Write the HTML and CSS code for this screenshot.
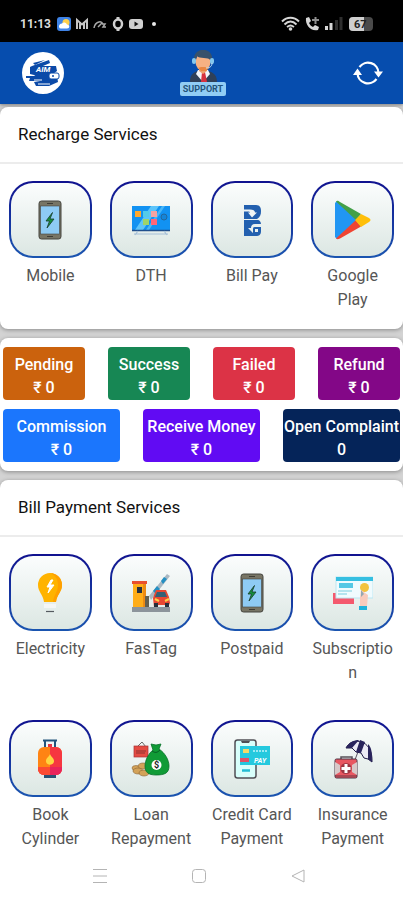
FILE: index.html
```html
<!DOCTYPE html>
<html lang="en">
<head>
  <meta charset="UTF-8">
  <meta name="viewport" content="width=device-width, initial-scale=1.0">
  <title>Recharge Services</title>
  <link rel="stylesheet" href="styles.css">
</head>
<body>

  <div class="status-bar">
    <span class="clock">11:13</span>
    <svg class="status-apps" width="102" height="16" viewBox="0 0 102 16" aria-hidden="true">
      <rect x="0" y="1" width="14" height="14" rx="3" fill="#3f83e6"/>
      <circle cx="9" cy="6.500" r="3.500" fill="#ffd04a"/>
      <path d="M2 11a3 3 0 0 1 3-3.500 3 3 0 0 1 5 1c3 0 3 4 0 4H4a2 2 0 0 1-2-1.500z" fill="#fff"/>
      <path d="M20 13V4l5 4.500L30 4v9M23 6v7M27 6v7" fill="none" stroke="#c4c4c4" stroke-width="2"/>
      <path d="M37 12c1-6 7-8 9-4M41 11l4-4M45 8h3l-2 3h3" fill="none" stroke="#a8a8a8" stroke-width="1.500"/>
      <ellipse cx="61" cy="8" rx="4" ry="4.500" fill="none" stroke="#cfcfcf" stroke-width="2.500"/>
      <path d="M61 1v3M61 12v3" stroke="#cfcfcf" stroke-width="3"/>
      <rect x="72" y="3" width="14" height="10" rx="3" fill="#d0d0d0"/>
      <path d="M77.500 5.500v5l4-2.500z" fill="#111"/>
      <circle cx="97" cy="8" r="2" fill="#e8e8e8"/>
    </svg>
    <svg class="status-signals" width="94" height="18" viewBox="0 0 94 18" aria-hidden="true">
      <g fill="none" stroke="#d6d6d6" stroke-width="2">
        <path d="M1 6.500c5-5 12-5 17 0M3.500 9.500c4-4 8-4 12 0M6 12c3-2 4-2 7 0"/>
      </g>
      <circle cx="9.500" cy="14" r="1.800" fill="#d6d6d6"/>
      <path d="M25 3l3-1 2 4-2 2c1 2 2 3 4 4l2-2 4 2-1 3c-7 2-13-5-12-12z" fill="#d6d6d6"/>
      <path d="M31 5h7M34.500 2v7" stroke="#8e8e8e" stroke-width="2"/>
      <path d="M45.500 11v4M50 8v7" stroke="#d6d6d6" stroke-width="3"/>
      <path d="M55.500 5v10M60 2v13" stroke="#2e2e2e" stroke-width="3"/>
      <rect x="68" y="2" width="24" height="14" rx="4" fill="#4a4a4a"/>
      <path d="M72 2h11v14H72a4 4 0 0 1-4-4V6a4 4 0 0 1 4-4z" fill="#cfcfcf"/>
      <text x="73" y="13" class="battery-text">67</text>
    </svg>
  </div>

  <header class="app-bar">
    <button class="bar-button" type="button" aria-label="Profile">
      <svg width="42" height="42" viewBox="0 0 42 42">
        <circle cx="21" cy="21" r="21" fill="#fff"/>
        <g fill="#0b4aa8">
          <path d="M10 14l17-6 1 3-7 3h13l1 5-7 5h7l1 6-9 4H14l-2-4 6-1H7l1-3h8l-4-3-4-1v-7z"/>
          <path d="M11 11l12-3-10 5z"/>
          <path d="M4 24h14v2H4z"/>
        </g>
        <path d="M12 28h8M16 32h12" stroke="#fff" stroke-width="1"/>
        <rect x="27" y="21" width="10" height="6" rx="2" fill="#fff" stroke="#0b4aa8"/>
        <circle cx="31" cy="24" r="1" fill="#0b4aa8"/>
        <text x="14" y="20" class="logo-text">AIM</text>
      </svg>
    </button>
    <button class="bar-button" type="button" aria-label="Support">
      <svg width="46" height="46" viewBox="0 0 46 46">
        <path d="M10 32c0-9 5-10 10-12h6c5 2 11 3 11 12z" fill="#2f4058"/>
        <path d="M18 20h10l2 4-7 8-7-8z" fill="#f2f6fa"/>
        <path d="M22 22h3l2 10h-6z" fill="#d6323f"/>
        <path d="M19 17h8v4l-4 3-4-3z" fill="#eda06f"/>
        <ellipse cx="23" cy="12" rx="7.500" ry="9" fill="#f6b183"/>
        <path d="M14 10c-1-14 20-13 18 0h-2c-1-3-11-1-13-4l-1 4z" fill="#37516b"/>
        <path d="M18 18l3-1h4l4 1-3 3h-5z" fill="#e98743"/>
        <rect x="12" y="8" width="4" height="6" rx="2" fill="#83c7ee"/>
        <rect x="30" y="8" width="4" height="6" rx="2" fill="#83c7ee"/>
        <path d="M32 13c0 4-3 5-6 5" fill="none" stroke="#c5e4f5"/>
        <rect x="0" y="32" width="46" height="14" rx="2" fill="#91cdf4"/>
        <text x="23" y="42" text-anchor="middle" class="support-text">SUPPORT</text>
      </svg>
    </button>
    <button class="bar-button" type="button" aria-label="Refresh">
      <svg width="30" height="26" viewBox="0 0 30 26">
        <path d="M6.500 7A10.500 10.500 0 0 1 25.500 13M23.500 19A10.500 10.500 0 0 1 4.500 13" fill="none" stroke="#fff" stroke-width="2.200"/>
        <path d="M4.500 8.500L9 15H0zM25.500 17.500L21 11.500h9z" fill="#fff"/>
      </svg>
    </button>
  </header>

  <main class="content">

    <section class="card">
      <h2 class="card-title">Recharge Services</h2>
      <div class="services">
        <button class="service" type="button">
          <span class="tile">
            <svg class="icon" viewBox="0 0 40 40">
              <g id="phone">
                <rect x="9" y="1" width="22" height="38" rx="2.500" fill="#777565" stroke="#45443e"/>
                <rect x="10.500" y="6" width="19" height="28" fill="#8ecbf4" stroke="#45443e" stroke-width=".6"/>
                <path d="M17 3.500h6M17 36.500h6" stroke="#3d3c36" stroke-width="1.200"/>
                <path d="M22.500 12.500L16 21h3.500l-2.500 7 7-9h-4z" fill="#14913f" stroke="#183b29" stroke-width=".8"/>
              </g>
            </svg>
          </span>
          <span class="name">Mobile</span>
        </button>
        <button class="service" type="button">
          <span class="tile">
            <svg class="icon" viewBox="0 0 40 40">
              <rect x="1" y="6" width="38" height="24" fill="#1292f2"/>
              <path d="M20 6h8L12 30H4z" fill="#5cc4fa"/>
              <path d="M31 6h3L18 30h-3z" fill="#48b6f7"/>
              <rect x="4" y="11" width="6" height="6" fill="#ffa92e"/>
              <rect x="12" y="11" width="6" height="6" fill="#54cbe8"/>
              <rect x="20" y="11" width="6" height="6" fill="#f6a3a2"/>
              <rect x="12" y="19" width="6" height="6" fill="#9ed36a"/>
              <rect x="20" y="19" width="6" height="6" fill="#ff6678"/>
              <circle cx="33" cy="17" r="3" fill="#1585d8" stroke="#23679d"/>
              <path d="M1 30.500h38" stroke="#20508d" stroke-width="1.500"/>
              <path d="M7 31l-3 4M33 31l3 4M3 34h34" fill="none" stroke="#a6c0d8" stroke-width="1.200"/>
            </svg>
          </span>
          <span class="name">DTH</span>
        </button>
        <button class="service" type="button">
          <span class="tile">
            <svg class="icon" viewBox="0 0 40 40">
              <path d="M12 5h12c4 0 5 3 5 6 0 4-1 6-4 8H12z" fill="#2360af"/>
              <path d="M12 20h13c3 0 4 2 4 5v6c0 4-2 5-5 5H12z" fill="#2360af"/>
              <path d="M12 9.500h6c3 0 5 1 5 3h2l-5 5-4-5h2c0-1-1-1-2-1h-4z" fill="#f1f5f5"/>
              <path d="M29 24h-6c-3 0-4 2-4 4h-3l5 5v-4c0-2 1-2 3-2h5zM23 29h3v3h-3z" fill="#eaf0ee"/>
            </svg>
          </span>
          <span class="name">Bill Pay</span>
        </button>
        <button class="service" type="button">
          <span class="tile">
            <svg class="icon" viewBox="0 0 40 40">
              <path d="M2 3v34l2 2 20-19L4 1z" fill="#2196f3"/>
              <path d="M3 1.500C4 .5 5 .5 7 2l21 12-5 6z" fill="#43a047"/>
              <path d="M3 38.500c1 1 2 1 4 0l21-12-5-6.500z" fill="#f04432"/>
              <path d="M28 14l8 4c2 1 2 3 0 4l-8 5-6-7z" fill="#ffbf09"/>
            </svg>
          </span>
          <span class="name">Google Play</span>
        </button>
      </div>
    </section>

    <section class="card stats">
      <div class="stats-row">
        <button class="stat pending" type="button">Pending<br>₹ 0</button>
        <button class="stat success" type="button">Success<br>₹ 0</button>
        <button class="stat failed" type="button">Failed<br>₹ 0</button>
        <button class="stat refund" type="button">Refund<br>₹ 0</button>
      </div>
      <div class="stats-row">
        <button class="stat commission" type="button">Commission<br>₹ 0</button>
        <button class="stat receive" type="button">Receive Money<br>₹ 0</button>
        <button class="stat complaint" type="button">Open Complaint<br>0</button>
      </div>
    </section>

    <section class="card bills">
      <h2 class="card-title">Bill Payment Services</h2>
      <div class="services">
        <button class="service" type="button">
          <span class="tile">
            <svg class="icon" viewBox="0 0 40 40">
              <path d="M20 0a12 12 0 0 1 12 12c0 7-5 9-6 17H14C13 21 8 19 8 12A12 12 0 0 1 20 0z" fill="#ffb300"/>
              <path d="M20 0a12 12 0 0 1 12 12c0 7-5 9-6 17h-3c1-8 5-10 5-17 0-6-3-10-8-12z" fill="#ffa000"/>
              <path d="M21 7l-4 7h3l-2 6 6-8h-4l3-5z" fill="#fff" stroke="#fff"/>
              <path d="M14 31h12v4H14z" fill="#f4f6f6"/>
              <path d="M16 38.500h8" stroke="#555b60" stroke-width="1.200"/>
            </svg>
          </span>
          <span class="name">Electricity</span>
        </button>
        <button class="service" type="button">
          <span class="tile">
            <svg class="icon" viewBox="0 0 40 40">
              <path d="M18 23L36 1l3 2-19 24z" fill="#a9b8c2"/>
              <path d="M22 18l4-5 3 3-4 5zM30 8l3-4 3 2-4 5z" fill="#238fc2"/>
              <rect x="2" y="10" width="12" height="24" fill="#ffad18"/>
              <path d="M12 10h3v24h-3z" fill="#ec8b14"/>
              <path d="M1 8h15v3H1z" fill="#e9502e"/>
              <rect x="6" y="14" width="5" height="6" fill="#26303f"/>
              <rect x="14" y="23" width="4" height="11" fill="#635f50"/>
              <path d="M25 17h10l3 7 1 6-2 4h-3v-2h-8v2h-3l-1-9z" fill="#e74732"/>
              <path d="M26 19h8l2 5H24z" fill="#346075"/>
              <path d="M24 26l4 2M38 26l-4 2" stroke="#ffcf47" stroke-width="2"/>
              <rect x="23" y="30" width="4" height="4" fill="#272e3b"/>
              <rect x="34" y="30" width="4" height="4" fill="#272e3b"/>
              <path d="M1 34h38v5H1z" fill="#8c949b"/>
            </svg>
          </span>
          <span class="name">FasTag</span>
        </button>
        <button class="service" type="button">
          <span class="tile">
            <svg class="icon" viewBox="0 0 40 40"><use href="#phone"/></svg>
          </span>
          <span class="name">Postpaid</span>
        </button>
        <button class="service" type="button">
          <span class="tile">
            <svg class="icon" viewBox="0 0 40 40">
              <rect x="0" y="20" width="21" height="11" fill="#f4596e"/>
              <rect x="3" y="4" width="37" height="21" fill="#f0fbfe" stroke="#bce7f2"/>
              <path d="M3 4h37v4H3z" fill="#35bfe1"/>
              <path d="M6 10h14v5H6z" fill="#55c8e5"/>
              <path d="M5 18h14M5 21h9" stroke="#76cddd" stroke-width="1.200"/>
              <circle cx="31.500" cy="14.500" r="4.500" fill="#f3c33f"/>
              <path d="M28 17l7 5-1 11h-7v-9z" fill="#f8cbbc"/>
              <path d="M28 17v7l3-3z" fill="#93a8b2"/>
              <path d="M26 33h8v4h-8z" fill="#20b2db"/>
            </svg>
          </span>
          <span class="name">Subscription</span>
        </button>
        <button class="service" type="button">
          <span class="tile">
            <svg class="icon" viewBox="0 0 40 40">
              <path d="M13 1.500h14M15 1v8M25 1v8" fill="none" stroke="#23547d" stroke-width="2"/>
              <path d="M18 5h4v4h-4z" fill="#e83545"/>
              <path d="M14 34h12v5H14z" fill="#285175"/>
              <rect x="8" y="8" width="24" height="28" rx="6" fill="#ff8413"/>
              <path d="M20 8h6a6 6 0 0 1 6 6v16a6 6 0 0 1-6 6h-6z" fill="#f63740"/>
              <path d="M8 28h24v2a6 6 0 0 1-6 6H14a6 6 0 0 1-6-6z" fill="#e9235b"/>
              <path d="M8 28h12v8h-6a6 6 0 0 1-6-6z" fill="#fb4b32"/>
              <path d="M20 15c1 3 4 4 4 7 0 5-8 5-8 0 0-3 3-4 4-7z" fill="#ffd640"/>
            </svg>
          </span>
          <span class="name">Book Cylinder</span>
        </button>
        <button class="service" type="button">
          <span class="tile">
            <svg class="icon" viewBox="0 0 40 40">
              <path d="M6 8l5-5 4 5" fill="none" stroke="#686868"/>
              <rect x="3" y="7" width="14" height="11" fill="#e44b42" stroke="#a83335" stroke-width=".7"/>
              <path d="M5 12h10M5 14h9" stroke="#8f3431"/>
              <g fill="#d3a258" stroke="#896535" stroke-width=".6">
                <ellipse cx="5" cy="29" rx="4" ry="2.500"/>
                <ellipse cx="12" cy="27" rx="5" ry="3"/>
                <ellipse cx="7" cy="32" rx="5" ry="3"/>
                <ellipse cx="13" cy="34" rx="5" ry="3"/>
              </g>
              <path d="M20 5l5 1 5-1-2 5c6 4 10 11 10 17 0 7-4 9-13 9-8 0-11-3-11-9 0-6 4-13 8-16z" fill="#109b36" stroke="#08712a" stroke-width=".8"/>
              <path d="M21 12c3 2 5 2 8-1" fill="none" stroke="#075f25"/>
              <circle cx="25.500" cy="26" r="5" fill="#fff"/>
              <text x="25.500" y="29" text-anchor="middle" class="coin-text">$</text>
            </svg>
          </span>
          <span class="name">Loan Repayment</span>
        </button>
        <button class="service" type="button">
          <span class="tile">
            <svg class="icon" viewBox="0 0 40 40">
              <rect x="3" y="1" width="21" height="38" rx="2.500" fill="#d8fffb" stroke="#504f55" stroke-width="1.500"/>
              <path d="M9 2h9l-1 2h-7z" fill="#504f55"/>
              <rect x="8" y="7" width="30" height="19" fill="#25c9de"/>
              <rect x="11" y="10" width="6" height="4" fill="#f3da67"/>
              <path d="M21 12h14" stroke="#c1f4fb" stroke-width="1.500" stroke-dasharray="2 1"/>
              <path d="M8 19h9v4H8z" fill="#de5366"/>
              <text x="22" y="24" class="pay-text">PAY</text>
              <path d="M10 31.500h8" stroke="#23bdd4" stroke-width="2.500"/>
            </svg>
          </span>
          <span class="name">Credit Card Payment</span>
        </button>
        <button class="service" type="button">
          <span class="tile">
            <svg class="icon" viewBox="0 0 40 40">
              <path d="M28 5l-8 21" stroke="#59535f"/>
              <path d="M13 9c5-11 27-10 26 14l-4-3-4-1-3-5-5-1-4-4z" fill="#eceaf5" stroke="#211c47"/>
              <path d="M13 9c3-6 8-8 13-8l-7 8zM27 1l5 2-4 11-5-1zM35 5c4 4 4 9 4 18l-4-3z" fill="#29235c"/>
              <path d="M8 20v-2h11v2" fill="none" stroke="#575158" stroke-width="1.500"/>
              <rect x="2" y="20" width="22" height="19" rx="1.500" fill="#e85761" stroke="#4e3544"/>
              <path d="M2 23l5 3v7l-5 3zM24 23l-5 3v7l5 3z" fill="#d8c8c8"/>
              <path d="M2 37h22" stroke="#6f3645"/>
              <circle cx="13" cy="29.500" r="5.500" fill="#9d3642"/>
              <path d="M13 25v9M8.500 29.500h9" stroke="#fff" stroke-width="3"/>
            </svg>
          </span>
          <span class="name">Insurance Payment</span>
        </button>
      </div>
    </section>

  </main>

  <nav class="nav-bar">
    <button class="nav-button" type="button" aria-label="Recent apps">
      <svg width="16" height="16" viewBox="0 0 16 16"><path d="M1 1.500h14M1 8h14M1 14.500h14"/></svg>
    </button>
    <button class="nav-button" type="button" aria-label="Home">
      <svg width="16" height="16" viewBox="0 0 16 16"><rect x="1.500" y="1.500" width="13" height="13" rx="3"/></svg>
    </button>
    <button class="nav-button" type="button" aria-label="Back">
      <svg width="16" height="16" viewBox="0 0 16 16"><path d="M14 2v12L2 8z"/></svg>
    </button>
  </nav>

</body>
</html>
```
FILE: styles.css
```css
* {
  box-sizing: border-box;
}

body {
  margin: 0;
  min-height: 100vh;
  display: flex;
  flex-direction: column;
  font-family: Roboto, Arial, sans-serif;
  font-size: 16px;
  color: #111;
  background: #d3d3d3;
}

button {
  margin: 0;
  padding: 0;
  border: none;
  background: none;
  font: inherit;
  color: inherit;
  cursor: pointer;
}

svg {
  display: block;
}

/* phone status bar */
.status-bar {
  display: flex;
  align-items: center;
  height: 42px;
  padding: 5px 28px 0 20px;
  background: #000;
  color: #ddd;
}

.clock {
  width: 37px;
  font-size: 12px;
  font-weight: 700;
}

.status-signals {
  margin-left: auto;
}

.battery-text {
  font-size: 11px;
  font-weight: 700;
  fill: #222;
}

/* app header */
.app-bar {
  display: grid;
  grid-template-columns: 1fr auto 1fr;
  align-items: center;
  height: 62px;
  padding: 0 20px 0 22px;
  background: #064dae;
  box-shadow: 0 1px 3px rgba(0, 0, 0, 0.4);
}

.bar-button:first-child {
  justify-self: start;
}

.bar-button:last-child {
  justify-self: end;
}

.logo-text {
  font-size: 8px;
  font-weight: 700;
  font-style: italic;
  fill: #fff;
}

.support-text {
  font-size: 9px;
  font-weight: 700;
  fill: #24547b;
}

.content {
  flex: 1;
  display: flex;
  flex-direction: column;
  gap: 9px;
  padding-top: 3px;
}

.card {
  background: #fff;
  border-radius: 8px;
  box-shadow: 0 1px 4px rgba(0, 0, 0, 0.35);
}

.card-title {
  margin: 0;
  padding: 16px 18px;
  border-bottom: 2px solid #ececec;
  font-size: 17px;
  font-weight: 400;
  line-height: 23px;
}

.services {
  display: grid;
  grid-template-columns: repeat(4, 1fr);
  row-gap: 35px;
  padding: 17px 0;
}

.service {
  display: flex;
  flex-direction: column;
  align-items: stretch;
  gap: 6px;
  min-width: 0;
  padding: 0 9px;
}

.tile {
  display: flex;
  align-items: center;
  justify-content: center;
  height: 77px;
  border: 2px solid transparent;
  border-radius: 24px;
  background: linear-gradient(#fbfdfd, #dce7e3) padding-box,
    linear-gradient(#10128f, #1a55b0) border-box;
}

.icon {
  width: 40px;
  height: 40px;
}

.name {
  line-height: 24px;
  color: #565656;
  text-align: center;
  overflow-wrap: anywhere;
}

.coin-text {
  font-size: 9px;
  font-weight: 700;
  fill: #222;
}

.pay-text {
  font-size: 7px;
  font-weight: 700;
  font-style: italic;
  fill: #fff;
}

/* transaction totals */
.stats {
  display: flex;
  flex-direction: column;
  gap: 9px;
  padding: 9px 3px;
}

.stats-row {
  display: flex;
  gap: 23px;
}

.stat {
  flex: 1 1 0;
  min-width: 0;
  padding: 6px 0 1px;
  border-radius: 4px;
  color: #fff;
  font-weight: 500;
  line-height: 23px;
  white-space: nowrap;
}

.pending { background: #cb620d; }
.success { background: #178754; }
.failed { background: #dc3346; }
.refund { background: #830787; }
.commission { background: #1b76fd; }
.receive { background: #610bf3; }
.complaint { background: #052459; }

.bills {
  flex: 1;
  border-radius: 8px 8px 0 0;
}

.bills .services {
  padding-bottom: 0;
}

/* phone navigation */
.nav-bar {
  position: relative;
  display: flex;
  align-items: center;
  justify-content: center;
  gap: 83px;
  height: 48px;
  padding-right: 6px;
  background: #fff;
}

.nav-button svg {
  fill: none;
  stroke: #b4b4b4;
  stroke-width: 1;
}
```
